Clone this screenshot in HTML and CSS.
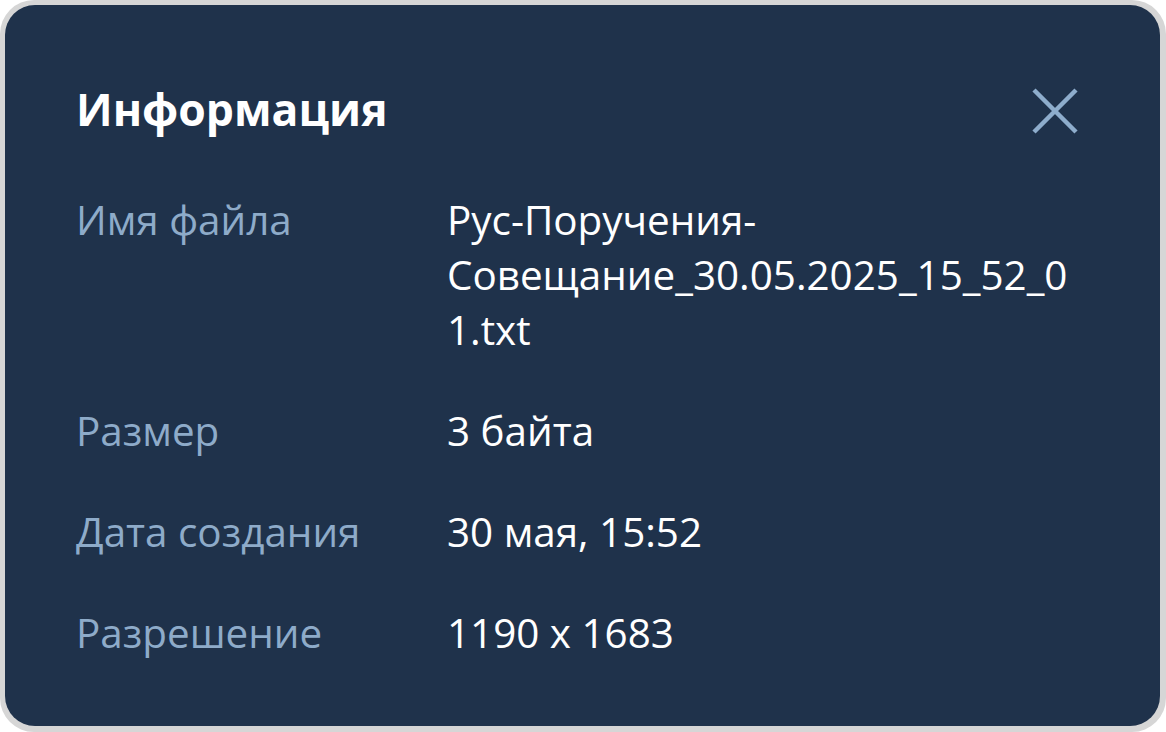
FILE: index.html
```html
<!DOCTYPE html>
<html lang="ru">
<head>
<meta charset="utf-8">
<link rel="stylesheet" href="styles.css">
</head>
<body>
<div class="frame">
  <div class="panel">
    <div class="header">
      <h1 class="title">Информация</h1>
      <button class="close" aria-label="Закрыть">
        <svg width="48" height="48" viewBox="0 0 48 48"><path d="M3 3 L45 45 M45 3 L3 45" stroke="#8eadcc" stroke-width="4.5" fill="none"/></svg>
      </button>
    </div>
    <div class="grid">
      <div class="label">Имя файла</div>
      <div class="value">Рус-Поручения-Совещание_30.05.2025_15_52_01.txt</div>
      <div class="label">Размер</div>
      <div class="value">3 байта</div>
      <div class="label">Дата создания</div>
      <div class="value">30 мая, 15:52</div>
      <div class="label">Разрешение</div>
      <div class="value">1190 x 1683</div>
    </div>
  </div>
</div>
</body>
</html>
```
FILE: styles.css
```css
html, body {
  margin: 0;
  padding: 0;
  background: #ffffff;
}
body {
  font-family: "Open Sans", "Noto Sans", sans-serif;
}
.frame {
  width: 1166px;
  height: 732px;
  box-sizing: border-box;
  background: #d6d6d6;
  border-radius: 34px;
  padding: 5px 6px 6px 5px;
}
.panel {
  height: 100%;
  box-sizing: border-box;
  background: #1f324b;
  border-radius: 30px;
  padding: 76px 78px 0 71px;
}
.header {
  display: flex;
  justify-content: space-between;
  align-items: center;
  height: 56px;
}
.title {
  margin: 0;
  color: #ffffff;
  font-size: 44.5px;
  font-weight: 700;
  line-height: 56px;
}
.close {
  background: none;
  border: 0;
  padding: 0;
  margin: 4px 3px 0 0;
  display: flex;
}
.grid {
  display: grid;
  grid-template-columns: 371px 640px;
  row-gap: 46px;
  margin-top: 55px;
  font-size: 40.4px;
  line-height: 55px;
}
.label {
  color: #8eabc9;
}
.value {
  color: #ffffff;
  overflow-wrap: anywhere;
}
```
